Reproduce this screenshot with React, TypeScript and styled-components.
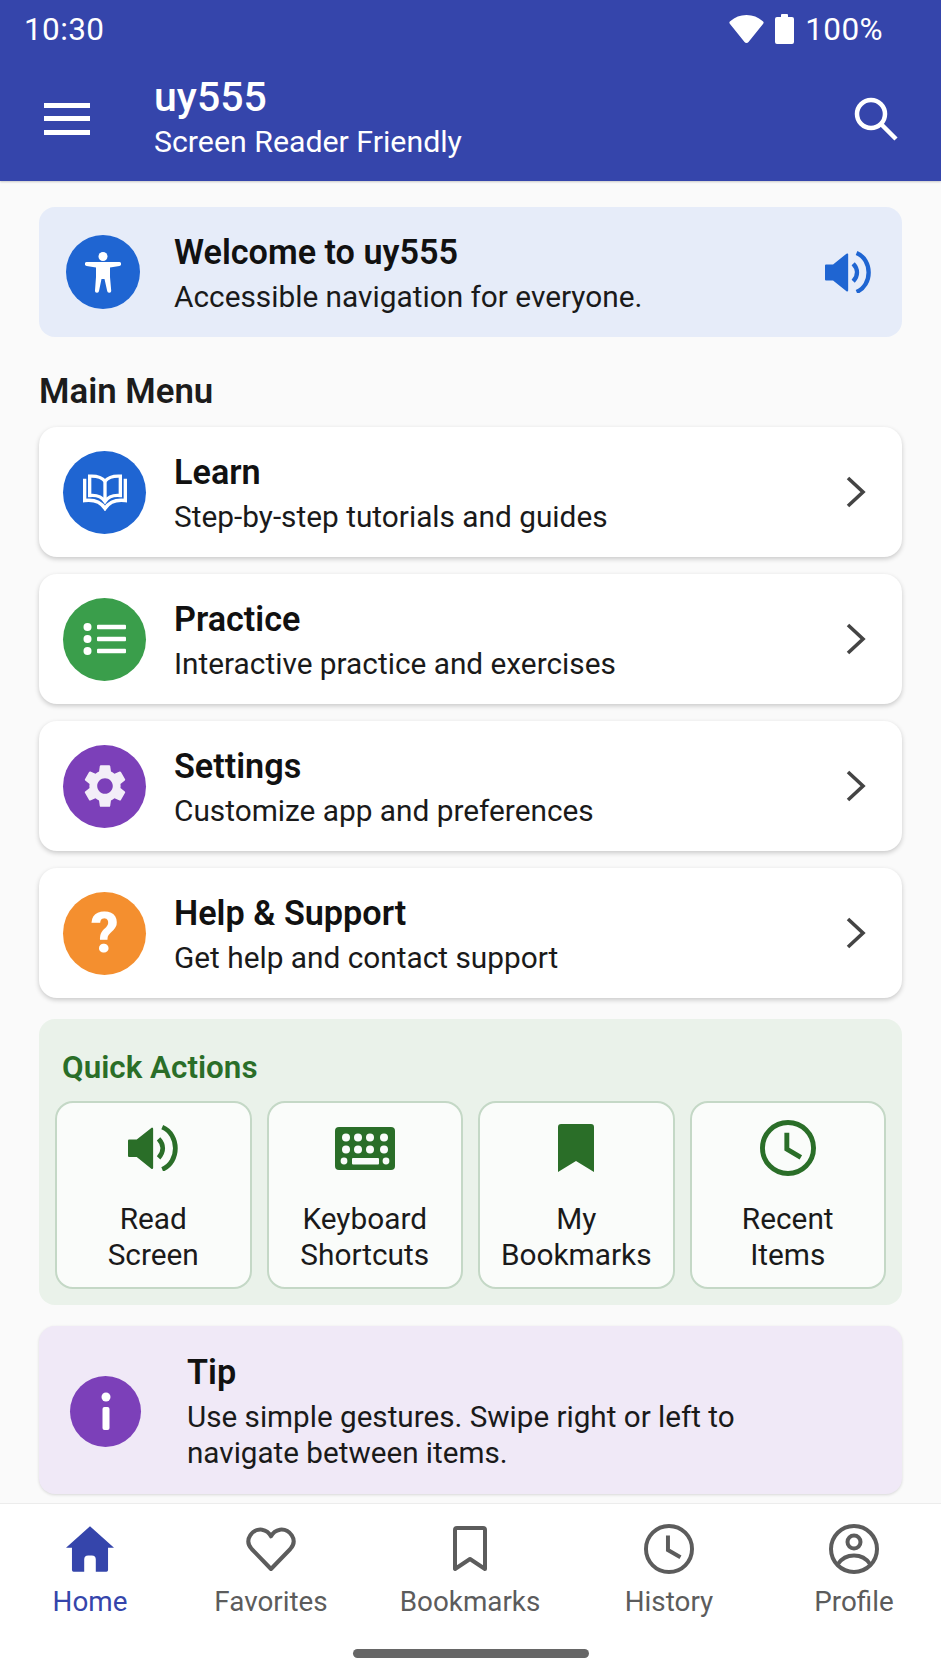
import React from "react";
import styled, { createGlobalStyle } from "styled-components";

const GlobalStyle = createGlobalStyle`
html, body {
  margin: 0;
  padding: 0;
  background: #fafafa;
}
* {
  box-sizing: border-box;
}
body {
  font-family: Roboto, "Liberation Sans", sans-serif;
}
`;

const colors = {
  indigo: "#3545ab",
  blue: "#1f65d2",
  green: "#3a9e4b",
  purple: "#7c40b9",
  orange: "#f48f2f",
  darkGreen: "#2a6e28",
  text: "#111111",
  gray: "#5c5c5c",
};

const Page = styled.div`
  width: 941px;
  height: 1672px;
  display: flex;
  flex-direction: column;
  overflow: hidden;
  background: #fafafa;
`;

const Header = styled.header`
  height: 181px;
  flex-shrink: 0;
  background: ${colors.indigo};
  color: #fff;
  box-shadow: 0 1px 2px rgba(0, 0, 0, 0.2);
`;

const StatusBar = styled.div`
  height: 58px;
  padding: 0 58px 0 24px;
  display: flex;
  align-items: center;
  justify-content: space-between;
  font-size: 31.5px;
  letter-spacing: 0.4px;
`;

const StatusRight = styled.div`
  display: flex;
  align-items: center;
  gap: 11px;
`;

const Toolbar = styled.div`
  height: 123px;
  padding: 0 43px 2px 44px;
  display: flex;
  align-items: center;
`;

const MenuIcon = styled.svg`
  width: 46px;
  height: 32px;
  margin-right: 64px;
`;

const TitleBlock = styled.div`
  flex: 1;
`;

const AppTitle = styled.div`
  font-size: 41px;
  font-weight: 500;
  line-height: 44px;
  margin-top: -3px;
`;

const AppSubtitle = styled.div`
  font-size: 30.3px;
  line-height: 36px;
  margin-top: 5px;
`;

const Main = styled.main`
  flex: 1;
  padding: 26px 39px 0 39px;
  display: flex;
  flex-direction: column;
`;

const Banner = styled.section`
  height: 130px;
  background: #e6ecf9;
  border-radius: 16px;
  padding: 0 30px 0 27px;
  display: flex;
  align-items: center;
`;

const CircleIcon = styled.div<{ $bg: string; $size: number }>`
  width: ${(p) => p.$size}px;
  height: ${(p) => p.$size}px;
  border-radius: 50%;
  background: ${(p) => p.$bg};
  flex-shrink: 0;
  display: flex;
  align-items: center;
  justify-content: center;
  color: #fff;
`;

const BannerText = styled.div`
  flex: 1;
  margin-left: 34px;
  padding-top: 2px;
`;

const CardTitle = styled.div`
  font-size: 34.2px;
  font-weight: 600;
  line-height: 40px;
  color: ${colors.text};
`;

const CardSub = styled.div`
  font-size: 29.8px;
  line-height: 36px;
  color: #1a1a1a;
  margin-top: 7px;
`;

const SectionHeading = styled.h2`
  margin: 35px 0 17px;
  font-size: 34.8px;
  line-height: 38px;
  font-weight: 600;
  color: #1c1c1c;
`;

const CardList = styled.div`
  display: flex;
  flex-direction: column;
  gap: 17px;
`;

const MenuCard = styled.div`
  height: 130px;
  background: #fff;
  border-radius: 18px;
  box-shadow: 0 2px 5px rgba(0, 0, 0, 0.2);
  padding: 0 35px 0 24px;
  display: flex;
  align-items: center;
`;

const CardText = styled.div`
  flex: 1;
  margin-left: 28px;
  padding-top: 3px;
`;

const Question = styled.span`
  font-size: 56px;
  font-weight: 800;
  line-height: 1;
`;

const QuickPanel = styled.section`
  margin-top: 21px;
  height: 286px;
  background: #eaf2ea;
  border-radius: 16px;
  padding: 30px 16px 16px;
  display: flex;
  flex-direction: column;
`;

const QuickTitle = styled.div`
  font-size: 31.4px;
  font-weight: 600;
  line-height: 38px;
  color: ${colors.darkGreen};
  margin: 0 0 14px 7px;
`;

const QuickGrid = styled.div`
  flex: 1;
  display: grid;
  grid-template-columns: repeat(4, 1fr);
  gap: 15px;
`;

const QuickButton = styled.div`
  background: #fafcfa;
  border: 2px solid #c4d8c6;
  border-radius: 18px;
  padding-top: 15px;
  display: flex;
  flex-direction: column;
  align-items: center;
`;

const IconSlot = styled.div`
  height: 60px;
  display: flex;
  align-items: center;
  justify-content: center;
`;

const QuickLabel = styled.div`
  margin-top: 23px;
  font-size: 29.8px;
  line-height: 36px;
  text-align: center;
  color: #1a1a1a;
`;

const TipCard = styled.section`
  margin-top: 21px;
  height: 168px;
  background: #f0e9f7;
  border-radius: 16px;
  box-shadow: 0 1px 3px rgba(0, 0, 0, 0.14);
  padding: 2px 30px 0 31px;
  display: flex;
  align-items: center;
`;

const TipText = styled.div`
  margin-left: 46px;
  flex: 1;
`;

const TipBody = styled.div`
  font-size: 29.65px;
  line-height: 36px;
  color: #1a1a1a;
  margin-top: 7px;
`;

const BottomNav = styled.nav`
  height: 169px;
  flex-shrink: 0;
  background: #fff;
  border-top: 1px solid #ececec;
  display: flex;
  flex-direction: column;
`;

const NavRow = styled.div`
  display: grid;
  grid-template-columns: 160px 202px 196px 202px 168px;
  padding: 16px 3px 0 10px;
`;

const NavItem = styled.div<{ $active?: boolean }>`
  display: flex;
  flex-direction: column;
  align-items: center;
  color: ${(p) => (p.$active ? colors.indigo : colors.gray)};
  font-size: 27.8px;
  line-height: 34px;
`;

const NavIconSlot = styled.div`
  height: 58px;
  display: flex;
  align-items: center;
  justify-content: center;
`;

const NavLabel = styled.span`
  margin-top: 7px;
`;

const HomeBar = styled.div`
  width: 236px;
  height: 9px;
  border-radius: 5px;
  background: #666;
  margin: 30px auto 0;
`;

const settingsPath =
  "M19.14 12.94c.04-.3.06-.61.06-.94 0-.32-.02-.64-.07-.94l2.03-1.58c.18-.14.23-.41.12-.61l-1.92-3.32c-.12-.22-.37-.29-.59-.22l-2.39.96c-.5-.38-1.03-.7-1.62-.94l-.36-2.54c-.04-.24-.24-.41-.48-.41h-3.84c-.24 0-.43.17-.47.41l-.36 2.54c-.59.24-1.13.57-1.62.94l-2.39-.96c-.22-.08-.47 0-.59.22L2.74 8.87c-.12.21-.08.47.12.61l2.03 1.58c-.05.3-.09.63-.09.94s.02.64.07.94l-2.03 1.58c-.18.14-.23.41-.12.61l1.92 3.32c.12.22.37.29.59.22l2.39-.96c.5.38 1.03.7 1.62.94l.36 2.54c.05.24.24.41.48.41h3.84c.24 0 .44-.17.47-.41l.36-2.54c.59-.24 1.13-.56 1.62-.94l2.39.96c.22.08.47 0 .59-.22l1.92-3.32c.12-.22.07-.47-.12-.61l-2.01-1.58zM12 15.6c-1.98 0-3.6-1.62-3.6-3.6s1.62-3.6 3.6-3.6 3.6 1.62 3.6 3.6-1.62 3.6-3.6 3.6z";

const Chevron = () => (
  <svg width="22" height="34" viewBox="0 0 22 34" fill="none" stroke="#444" strokeWidth="3.6">
    <path d="M3 3l15 14L3 31" />
  </svg>
);

const AccessibilityIcon = () => (
  <svg width="36" height="41" viewBox="0 0 36 41" fill="#fff">
    <circle cx="18" cy="4.5" r="4.5" />
    <path d="M2 10h32a2 2 0 0 1 .4 4L25 15.5V25l1.2 13.5a2 2 0 0 1-4 .5L19.5 27h-3L14 39a2 2 0 0 1-4-.5L11 25v-9.500L1.600 14A2 2 0 0 1 2 10z" />
  </svg>
);

const SpeakerIcon = ({ width, color }: { width: number; color: string }) => (
  <svg width={width} viewBox="0 0 140 128" fill="none">
    <path d="M3 40H24L64 8a3 3 0 0 1 5 2V118a3 3 0 0 1-5 2L24 88H3a3 3 0 0 1-3-3V43a3 3 0 0 1 3-3z" fill={color} />
    <path d="M84 38c15 16 15 36 0 52" stroke={color} strokeWidth="13" />
    <path d="M94 6c48 20 48 96 0 116" stroke={color} strokeWidth="13" />
  </svg>
);

const BookIcon = () => (
  <svg width="44" height="37" viewBox="0 0 132 110" fill="none" stroke="#fff" strokeWidth="10">
    <path d="M20 6c17-1 36 3 46 15 10-12 29-16 46-15v58c-19-2-36 3-46 18-10-15-27-20-46-18z" />
    <path d="M66 21v60" />
    <path d="M5 14v65c24-3 47 2 61 24 14-22 37-27 61-24V14" strokeWidth="10" />
  </svg>
);

const ListIcon = () => (
  <svg width="44" height="34" viewBox="0 0 44 34" fill="#fff">
    <circle cx="4.500" cy="5" r="4" />
    <circle cx="4.500" cy="17" r="4" />
    <circle cx="4.500" cy="29" r="4" />
    <rect x="14" y="2.800" width="29" height="4.500" rx="1" />
    <rect x="14" y="14.800" width="29" height="4.500" rx="1" />
    <rect x="14" y="26.800" width="29" height="4.500" rx="1" />
  </svg>
);

const GearIcon = () => (
  <svg width="52" height="52" viewBox="0 0 24 24" fill="#f3eef8">
    <path d={settingsPath} />
  </svg>
);

const KeyboardIcon = () => (
  <svg width="60" height="43" viewBox="0 0 60 43">
    <rect width="60" height="43" rx="4" fill={colors.darkGreen} />
    <g fill="#fafcfa">
      {[11, 23, 35, 49].map((x) => (
        <circle key={`a${x}`} cx={x} cy="10.500" r="4" />
      ))}
      {[11, 23, 35, 49].map((x) => (
        <circle key={`b${x}`} cx={x} cy="22.500" r="4" />
      ))}
      <circle cx="9" cy="34" r="3.400" />
      <circle cx="51" cy="34" r="3.400" />
      <rect x="17" y="31" width="27" height="6.500" rx="1" />
    </g>
  </svg>
);

const RibbonIcon = () => (
  <svg width="36" height="48" viewBox="0 0 36 48" fill={colors.darkGreen}>
    <path d="M0 3a3 3 0 0 1 3-3h30a3 3 0 0 1 3 3v45L18 37 0 48z" />
  </svg>
);

const ClockIcon = ({ size, color, weight }: { size: number; color: string; weight: number }) => (
  <svg width={size} height={size} viewBox="0 0 48 48" fill="none" stroke={color} strokeWidth={weight}>
    <circle cx="24" cy="24" r={24 - weight / 2} />
    <path d="M23 11v14l12 7" />
  </svg>
);

const HomeIcon = () => (
  <svg width="48" height="46" viewBox="0 0 145 137" fill={colors.indigo}>
    <path d="M72.500 0L145 65H127V132a5 5 0 0 1-5 5H90V100a12 12 0 0 0-12-12H67a12 12 0 0 0-12 12V137H23a5 5 0 0 1-5-5V65H0z" />
  </svg>
);

const HeartIcon = () => (
  <svg width="50" height="45" viewBox="0 0 150 135" fill="none" stroke={colors.gray} strokeWidth="12" strokeLinejoin="round">
    <path d="M75 126L17 66C-8 38 20 5 48 8c12 2 22 10 27 20 5-10 15-18 27-20 28-3 56 30 31 58z" />
  </svg>
);

const BookmarkOutline = () => (
  <svg width="34" height="46" viewBox="0 0 34 46" fill="none" stroke={colors.gray} strokeWidth="4" strokeLinejoin="round">
    <path d="M2 4a2 2 0 0 1 2-2h26a2 2 0 0 1 2 2v39L17 33 2 43z" />
  </svg>
);

const ProfileIcon = () => (
  <svg width="50" height="50" viewBox="0 0 50 50" fill="none" stroke={colors.gray} strokeWidth="4">
    <circle cx="25" cy="25" r="23" />
    <circle cx="25" cy="18" r="6.500" />
    <path d="M9 40c4-6 10-8.500 16-8.500s12 2.500 16 8.500" />
  </svg>
);

const menuItems = [
  { title: "Learn", sub: "Step-by-step tutorials and guides", bg: colors.blue, icon: <BookIcon /> },
  { title: "Practice", sub: "Interactive practice and exercises", bg: colors.green, icon: <ListIcon /> },
  { title: "Settings", sub: "Customize app and preferences", bg: colors.purple, icon: <GearIcon /> },
  { title: "Help & Support", sub: "Get help and contact support", bg: colors.orange, icon: <Question>?</Question> },
];

const quickActions = [
  { lines: ["Read", "Screen"], icon: <SpeakerIcon width={51} color={colors.darkGreen} /> },
  { lines: ["Keyboard", "Shortcuts"], icon: <KeyboardIcon /> },
  { lines: ["My", "Bookmarks"], icon: <RibbonIcon /> },
  { lines: ["Recent", "Items"], icon: <ClockIcon size={56} color={colors.darkGreen} weight={4.2} /> },
];

const navItems = [
  { label: "Home", active: true, icon: <HomeIcon /> },
  { label: "Favorites", icon: <HeartIcon /> },
  { label: "Bookmarks", icon: <BookmarkOutline /> },
  { label: "History", icon: <ClockIcon size={50} color={colors.gray} weight={3.8} /> },
  { label: "Profile", icon: <ProfileIcon /> },
];

export default function App() {
  return (
    <Page>
      <GlobalStyle />
      <Header>
        <StatusBar>
          <span>10:30</span>
          <StatusRight>
            <svg width="35" height="28" viewBox="0 0 35 28" fill="#fff">
              <path d="M15.500 27L1 9a2 2 0 0 1 .5-3C6 2 11 0 17.500 0S29 2 33.500 6a2 2 0 0 1 .5 3L19.500 27a2.500 2.500 0 0 1-4 0z" />
            </svg>
            <svg width="19" height="30" viewBox="0 0 19 30" fill="#fff">
              <path d="M6 1a1 1 0 0 1 1-1h5a1 1 0 0 1 1 1v2h4a2 2 0 0 1 2 2v23a2 2 0 0 1-2 2H2a2 2 0 0 1-2-2V5a2 2 0 0 1 2-2h4z" />
            </svg>
            <span>100%</span>
          </StatusRight>
        </StatusBar>
        <Toolbar>
          <MenuIcon viewBox="0 0 46 32" fill="#fff">
            <rect width="46" height="5" />
            <rect y="13" width="46" height="5" />
            <rect y="27" width="46" height="5" />
          </MenuIcon>
          <TitleBlock>
            <AppTitle>uy555</AppTitle>
            <AppSubtitle>Screen Reader Friendly</AppSubtitle>
          </TitleBlock>
          <svg width="44" height="44" viewBox="0 0 44 44" fill="none" stroke="#fff" strokeWidth="4.500">
            <circle cx="17" cy="17" r="14" />
            <path d="M27 27l15 15" />
          </svg>
        </Toolbar>
      </Header>

      <Main>
        <Banner>
          <CircleIcon $bg={colors.blue} $size={74}>
            <AccessibilityIcon />
          </CircleIcon>
          <BannerText>
            <CardTitle>Welcome to uy555</CardTitle>
            <CardSub>Accessible navigation for everyone.</CardSub>
          </BannerText>
          <SpeakerIcon width={47} color={colors.blue} />
        </Banner>

        <SectionHeading>Main Menu</SectionHeading>
        <CardList>
          {menuItems.map((item) => (
            <MenuCard key={item.title}>
              <CircleIcon $bg={item.bg} $size={83}>
                {item.icon}
              </CircleIcon>
              <CardText>
                <CardTitle>{item.title}</CardTitle>
                <CardSub>{item.sub}</CardSub>
              </CardText>
              <Chevron />
            </MenuCard>
          ))}
        </CardList>

        <QuickPanel>
          <QuickTitle>Quick Actions</QuickTitle>
          <QuickGrid>
            {quickActions.map((action) => (
              <QuickButton key={action.lines[0]}>
                <IconSlot>{action.icon}</IconSlot>
                <QuickLabel>
                  {action.lines[0]}
                  <br />
                  {action.lines[1]}
                </QuickLabel>
              </QuickButton>
            ))}
          </QuickGrid>
        </QuickPanel>

        <TipCard>
          <CircleIcon $bg={colors.purple} $size={71}>
            <svg width="12" height="38" viewBox="0 0 12 38" fill="#fff">
              <circle cx="6" cy="5" r="4.500" />
              <rect x="2.500" y="15" width="7" height="23" rx="2" />
            </svg>
          </CircleIcon>
          <TipText>
            <CardTitle>Tip</CardTitle>
            <TipBody>
              Use simple gestures. Swipe right or left to
              <br />
              navigate between items.
            </TipBody>
          </TipText>
        </TipCard>
      </Main>

      <BottomNav>
        <NavRow>
          {navItems.map((item) => (
            <NavItem key={item.label} $active={item.active}>
              <NavIconSlot>{item.icon}</NavIconSlot>
              <NavLabel>{item.label}</NavLabel>
            </NavItem>
          ))}
        </NavRow>
        <HomeBar />
      </BottomNav>
    </Page>
  );
}
